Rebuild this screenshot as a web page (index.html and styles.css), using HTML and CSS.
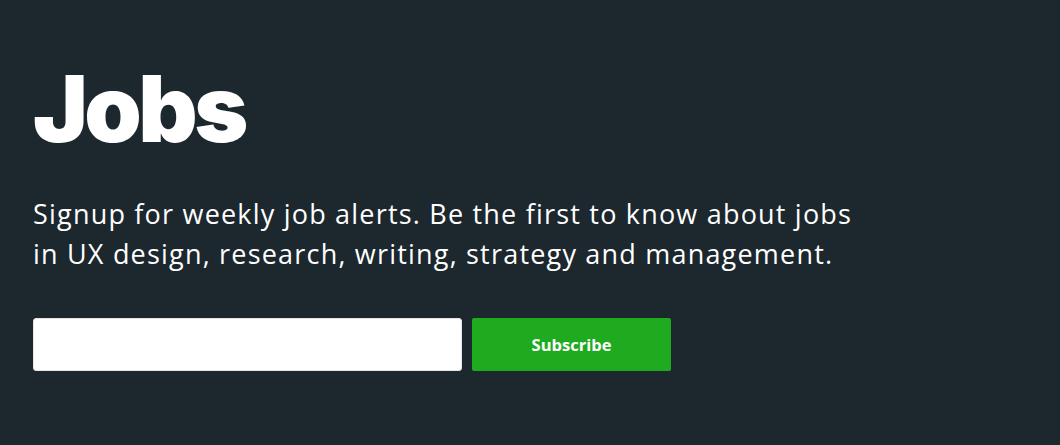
FILE: index.html
```html
<!DOCTYPE html>
<html>
<head>
<meta charset="utf-8">
<link rel="stylesheet" href="styles.css">
</head>
<body>
<section class="jobs">
  <h1 class="jobs-title">Jobs</h1>
  <p class="jobs-lead">Signup for weekly job alerts. Be the first to know about jobs in UX design, research, writing, strategy and management.</p>
  <form class="jobs-form">
    <input class="jobs-input" type="email" aria-label="Email">
    <button class="jobs-button" type="button">Subscribe</button>
  </form>
</section>
</body>
</html>
```
FILE: styles.css
```css
html, body {
  margin: 0;
  padding: 0;
  background: #1c272e;
  height: 100%;
}
.jobs {
  padding: 54px 33px 0;
  font-family: "Open Sans", sans-serif;
  color: #fff;
}
.jobs-title {
  margin: 0;
  font-family: Inter, sans-serif;
  font-weight: 900;
  font-size: 92px;
  line-height: 110px;
  letter-spacing: -3.5px;
}
.jobs-lead {
  margin: 30px 0 0;
  font-size: 27px;
  line-height: 40px;
  width: 835px;
  font-weight: 400;
  letter-spacing: 1.2px;
}
.jobs-form {
  display: flex;
  gap: 10px;
  margin-top: 44px;
}
.jobs-input {
  width: 429px;
  height: 53px;
  box-sizing: border-box;
  border: 1px solid #e6e6e6;
  border-radius: 3px;
  background: #fff;
  margin: 0;
}
.jobs-button {
  width: 199px;
  height: 53px;
  border: 0;
  border-radius: 2px;
  background: #1eab1f;
  color: #fff;
  font-family: "Open Sans", sans-serif;
  font-weight: 700;
  font-size: 16.5px;
  margin: 0;
}
```
